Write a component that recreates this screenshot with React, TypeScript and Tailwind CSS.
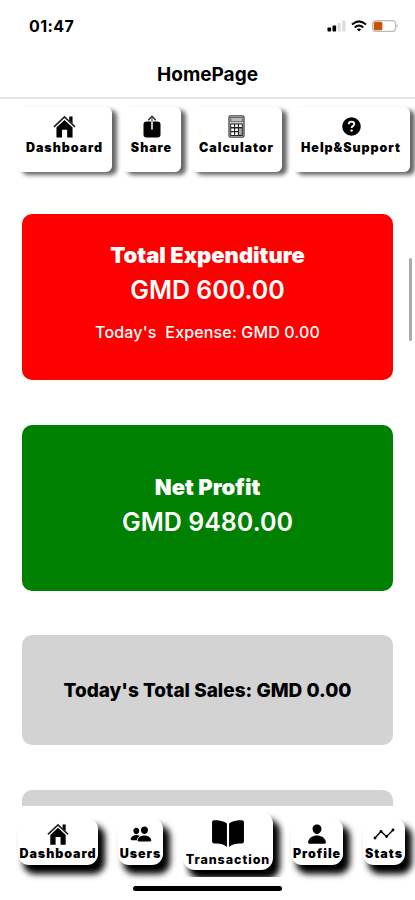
import type { ReactNode } from "react";
import { IoBook, IoPeople, IoPerson } from "react-icons/io5";

interface ShortcutProps {
  label: string;
  icon: ReactNode;
  width: string;
}

function HomeIcon({ size }: { size: number }) {
  return (
    <svg width={size} height={size} viewBox="0 0 24 24">
      <path d="M17 1.6h3.4v7.4L17 5.8z" />
      <path d="M1 12.4 12 2l11 10.4" fill="none" stroke="#222" strokeWidth="1.7" />
      <path d="M12 5.2 20.4 13v10.6h-5.6v-8.2H9.4v8.2H3.6V13z" />
    </svg>
  );
}

function ShareIcon() {
  return (
    <svg width="18" height="23" viewBox="0 0 18 23">
      <rect x="0.5" y="6.5" width="17" height="16" rx="3" />
      <path d="M9 5v9.5" stroke="#ddd" strokeWidth="1.8" />
      <path d="M5.2 5.2 9 1.4l3.8 3.8" fill="none" stroke="#333" strokeWidth="1.5" />
      <path d="M9 2v4.5" stroke="#555" strokeWidth="1.2" />
    </svg>
  );
}

function CalculatorIcon() {
  return (
    <svg width="17" height="23" viewBox="0 0 17 23">
      <rect x="1" y="0.8" width="15" height="21.4" rx="1.4" fill="#eee" stroke="#444" strokeWidth="1.3" />
      <rect x="2.7" y="2.4" width="11.6" height="4.4" fill="#bbb" stroke="#555" strokeWidth="0.9" />
      <rect x="2.2" y="8.4" width="12.6" height="12.6" fill="#222" />
      <path
        d="M3.2 9.5h2.8v2.6H3.2zM7.1 9.5h2.8v2.6H7.1zM11 9.5h2.8v2.6H11zM3.2 13.4h2.8V16H3.2zM7.1 13.4h2.8V16H7.1zM3.2 17.3h2.8v2.6H3.2zM7.1 17.3h2.8v2.6H7.1z"
        fill="#fff"
      />
      <path d="M11 13.4h2.8v6.5H11z" fill="#aaa" />
    </svg>
  );
}

function HelpIcon() {
  return (
    <svg width="19" height="19" viewBox="0 0 19 19">
      <circle cx="9.5" cy="9.5" r="9.3" />
      <path d="M6.7 7.3Q6.8 4.7 9.5 4.7t2.8 2.4c0 1.9-2.7 1.9-2.7 4" fill="none" stroke="#fff" strokeWidth="1.8" />
      <circle cx="9.6" cy="13.6" r="1.2" fill="#fff" />
    </svg>
  );
}

function StatsIcon() {
  return (
    <svg width="22" height="12" viewBox="0 0 22 12">
      <path d="m2 10 6-6.5 5.6 5L20 2" fill="none" stroke="#000" strokeWidth="1.3" />
      <circle cx="2" cy="10" r="1.4" />
      <circle cx="8" cy="3.5" r="1.4" />
      <circle cx="13.6" cy="8.5" r="1.4" />
      <circle cx="20" cy="2" r="1.4" />
    </svg>
  );
}

function Shortcut({ label, icon, width }: ShortcutProps) {
  return (
    <div
      className={`${width} flex h-[65px] shrink-0 flex-col items-center rounded-md bg-white pt-[7px] shadow-[5px_3px_4px_#666]`}
    >
      <div className="flex h-[25px] items-center justify-center">{icon}</div>
      <span className="mt-px text-[12.5px] leading-4 font-black tracking-[0.95px] whitespace-nowrap">{label}</span>
    </div>
  );
}

function Tab({ label, icon, width }: ShortcutProps) {
  return (
    <div
      className={`${width} flex h-[47px] shrink-0 flex-col items-center rounded-[11px] bg-white pt-[5px] shadow-[6px_8px_6px_1px_#000]`}
    >
      <div className="flex h-[22px] items-center justify-center">{icon}</div>
      <span className="mt-px text-[12.5px] leading-4 font-black tracking-[0.95px] whitespace-nowrap">{label}</span>
    </div>
  );
}

function StatusBar() {
  return (
    <div className="flex h-[51px] items-center justify-between pr-[17px] pl-[29px]">
      <span className="text-base font-bold tracking-[0.4px]">01:47</span>
      <div className="flex items-center gap-[5px]">
        <svg width="19" height="12" viewBox="0 0 19 12">
          <rect x="0.5" y="7.5" width="3.6" height="4" rx="0.8" />
          <rect x="5.5" y="5.5" width="3.6" height="6" rx="0.8" />
          <rect x="10.5" y="3" width="3.2" height="8.5" rx="0.8" fill="#ddd" />
          <rect x="15.3" y="0.5" width="3.2" height="11" rx="0.8" fill="#ddd" />
        </svg>
        <svg width="16" height="12" viewBox="0 0 16 12" fill="none" stroke="#000" strokeWidth="2">
          <path d="M1 4.6Q8-1.8 15 4.6M3.7 7.4Q8 3.6 12.3 7.4" />
          <path d="M5.8 9.3Q8 7.6 10.2 9.3L8 11.6Z" fill="#000" stroke="none" />
        </svg>
        <svg width="26" height="12" viewBox="0 0 26 12">
          <rect x="0.6" y="0.6" width="22.8" height="10.8" rx="3" fill="#fff" stroke="#bbb" strokeWidth="1.1" />
          <rect x="1.8" y="1.8" width="8.6" height="8.4" rx="1.5" fill="#c75400" />
          <path d="M24.5 4.2v3.6q1.2-.6 1.2-1.8t-1.2-1.8" fill="#aaa" />
        </svg>
      </div>
    </div>
  );
}

export default function App() {
  return (
    <div className="relative flex h-[900px] w-[415px] flex-col overflow-hidden bg-white font-['Inter',sans-serif] text-black">
      <StatusBar />
      <header className="flex h-12 items-center justify-center border-b-2 border-[#e6e6e6]">
        <h1 className="pt-[2px] text-[19px] leading-6 font-bold">HomePage</h1>
      </header>

      {/* Shortcuts */}
      <div className="flex h-[86px] shrink-0 gap-2.5 overflow-hidden pt-[8px] pl-[17px]">
        <Shortcut label="Dashboard" width="w-[95px]" icon={<HomeIcon size={23} />} />
        <Shortcut label="Share" width="w-[59px]" icon={<ShareIcon />} />
        <Shortcut label="Calculator" width="w-[91px]" icon={<CalculatorIcon />} />
        <Shortcut label="Help&Support" width="w-[118px]" icon={<HelpIcon />} />
      </div>

      {/* Summary cards */}
      <main className="flex h-[621px] shrink-0 flex-col gap-[44.5px] overflow-hidden pt-[29px] pr-[22px] pl-[22px] text-center">
        <section className="h-[166px] shrink-0 rounded-[10px] bg-[#ff0000] pt-[25px] text-white">
          <h2 className="text-[22px] leading-8 font-black">Total Expenditure</h2>
          <p className="mt-px text-[25px] leading-9 font-semibold">GMD 600.00</p>
          <p className="mt-3 text-base leading-6 font-medium tracking-[0.15px] whitespace-pre">
            {"Today's  Expense: GMD 0.00"}
          </p>
        </section>
        <section className="h-[166px] shrink-0 rounded-[10px] bg-[#008000] pt-[46px] text-white">
          <h2 className="text-[22px] leading-8 font-black">Net Profit</h2>
          <p className="mt-px text-[25px] leading-9 font-semibold">GMD 9480.00</p>
        </section>
        <section className="flex h-[110px] shrink-0 items-center justify-center rounded-[10px] bg-[#d3d3d3] pt-[2px]">
          <p className="text-[19px] font-extrabold">Today's Total Sales: GMD 0.00</p>
        </section>
        <section className="h-[110px] shrink-0 rounded-[10px] bg-[#d3d3d3]" />
      </main>

      {/* Scroll indicator */}
      <div className="absolute top-[258px] right-[3px] h-[83px] w-[3px] rounded-full bg-[#aaa]" />

      {/* Tab bar */}
      <nav className="flex h-[80px] shrink-0 items-start pt-[12px] pl-[18px]">
        <Tab label="Dashboard" width="w-[80px]" icon={<HomeIcon size={22} />} />
        <div className="w-5" />
        <Tab label="Users" width="w-[45px]" icon={<IoPeople size={22} />} />
        {/* The larger middle tab cuts its shadow off at the bottom */}
        <div className="-mt-[6px] -mr-[15px] ml-5 h-[65px] w-[105px] shrink-0 overflow-hidden">
          <div className="flex h-[58px] w-[90px] flex-col items-center rounded-[12px] bg-white pt-[5px] shadow-[6px_8px_6px_1px_#000]">
            <IoBook size={34} />
            <span className="mt-px text-[12.5px] leading-4 font-extrabold tracking-[0.95px]">Transaction</span>
          </div>
        </div>
        <div className="w-[18px]" />
        <Tab label="Profile" width="w-[52px]" icon={<IoPerson size={22} />} />
        <div className="w-5" />
        <Tab label="Stats" width="w-[42px]" icon={<StatsIcon />} />
      </nav>
      <div className="mx-auto h-[5px] w-[149px] rounded-full bg-black" />
    </div>
  );
}
